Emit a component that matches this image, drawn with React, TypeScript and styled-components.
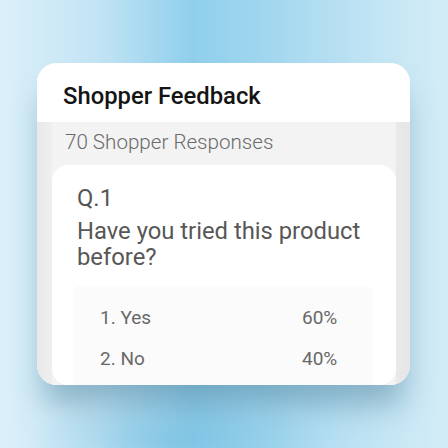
import styled, {createGlobalStyle} from "styled-components";

interface IOption {
  label: string;
  share: string;
}

const options: IOption[] = [
  {label: '1. Yes', share: '60%'},
  {label: '2. No', share: '40%'},
];

const GlobalStyle = createGlobalStyle`
  html, body {
    margin: 0;
    padding: 0;
  }

  body {
    font-family: Roboto, "Noto Sans", Arial, sans-serif;
    -webkit-font-smoothing: antialiased;
  }
`;

const App = () => {
  return (
    <>
      <GlobalStyle/>
      <Page>
        <Card>
          <Header>
            <Title>Shopper Feedback</Title>
          </Header>
          <Body>
            <Responses>70 Shopper Responses</Responses>
            <QuestionCard>
              <QuestionNumber>Q.1</QuestionNumber>
              <QuestionText>Have you tried this product before?</QuestionText>
              <OptionList>
                {options.map((option) => (
                  <OptionRow key={option.label}>
                    <OptionLabel>{option.label}</OptionLabel>
                    <OptionShare>{option.share}</OptionShare>
                  </OptionRow>
                ))}
              </OptionList>
            </QuestionCard>
          </Body>
        </Card>
      </Page>
    </>
  );
};

const Page = styled.div`
  width: 448px;
  height: 448px;
  box-sizing: border-box;
  padding: 63px 38px 63px 37px;
  overflow: hidden;
  background:
    radial-gradient(ellipse 150px 45px at 175px 440px, rgba(110, 185, 220, 0.5), rgba(110, 185, 220, 0) 100%),
    linear-gradient(to right, #dcf0fa 0%, #c2e4f4 22%, #90cfec 43%, #a4d8ef 62%, #c4e5f4 85%, #d4ecf8 100%);
`;

const Card = styled.div`
  height: 322px;
  display: flex;
  flex-direction: column;
  border-radius: 20px;
  overflow: hidden;
  background: #ffffff;
  box-shadow: 0 26px 30px -6px rgba(80, 130, 155, 0.5);
`;

const Header = styled.div`
  height: 59px;
  box-sizing: border-box;
  padding: 19px 0 0 26px;
  background: #ffffff;
`;

const Title = styled.h1`
  margin: 0;
  font-size: 23.8px;
  line-height: 28px;
  font-weight: 500;
  color: #141414;
`;

const Body = styled.div`
  flex: 1;
  display: flex;
  flex-direction: column;
  background: linear-gradient(
    to right,
    #e8e8e8 0,
    #efefef 15px,
    #f3f3f3 15px,
    #f3f3f3 calc(100% - 14px),
    #e9e9e9 calc(100% - 14px),
    #e6e6e6 100%
  );
`;

const Responses = styled.div`
  height: 43px;
  box-sizing: border-box;
  padding: 7px 0 0 28px;
  font-size: 20.6px;
  line-height: 26px;
  font-weight: 300;
  color: #6a6a6a;
`;

const QuestionCard = styled.div`
  flex: 1;
  display: flex;
  flex-direction: column;
  margin: 0 14px 0 15px;
  padding: 19px 0 0 25px;
  border-radius: 16px;
  background: #ffffff;
`;

const QuestionNumber = styled.div`
  font-size: 23.8px;
  line-height: 28px;
  color: #555555;
`;

const QuestionText = styled.div`
  margin-top: 6px;
  width: 300px;
  font-size: 23.8px;
  line-height: 26px;
  color: #575757;
`;

const OptionList = styled.div`
  flex: 1;
  margin: 16px 0 0 -4px;
  width: 300px;
  padding-top: 11px;
  box-sizing: border-box;
  border-radius: 6px 6px 0 0;
  background: #fbfbfb;
`;

const OptionRow = styled.div`
  height: 41px;
  display: grid;
  grid-template-columns: 1fr 71px;
  align-items: center;
  padding-left: 27px;
  font-size: 19px;
  color: #686868;
`;

const OptionLabel = styled.span``;

const OptionShare = styled.span``;

export default App;
